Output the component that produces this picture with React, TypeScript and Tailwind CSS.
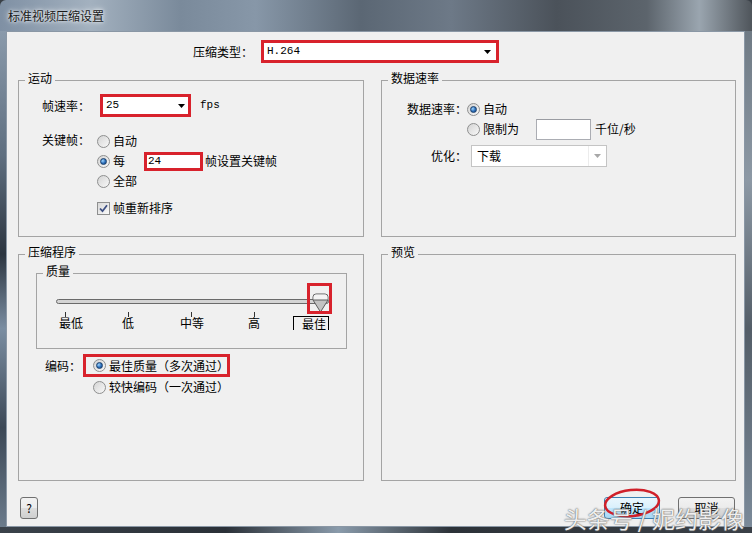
import React from 'react';

const Radio = ({ checked }: { checked?: boolean }) => (
  <span className="flex h-[13px] w-[13px] shrink-0 items-center justify-center rounded-full border border-[#8e8f8f] bg-[linear-gradient(135deg,#d4d4d4,#f8f8f8)]">
    {checked && (
      <span className="h-[7px] w-[7px] rounded-full border border-[#1b3f6b] bg-[radial-gradient(circle_at_35%_35%,#9fd6ff,#2a6cb8_55%,#174d8a)]" />
    )}
  </span>
);

const Check = () => (
  <span className="flex h-[13px] w-[13px] shrink-0 items-center justify-center border border-[#8e8f8f] bg-[linear-gradient(135deg,#d8d8d8,#fafafa)]">
    <svg width="9" height="9" viewBox="0 0 9 9">
      <path d="M1 4.5 L3.5 7.2 L8 1.3" stroke="#3d4f82" strokeWidth="1.8" fill="none" />
    </svg>
  </span>
);

const Arrow = ({ gray }: { gray?: boolean }) => (
  <svg width="7" height="4" viewBox="0 0 7 4">
    <path d="M0 0H7L3.5 4Z" fill={gray ? '#a8a8a8' : '#000'} />
  </svg>
);

const Group = ({ title, className, children }: { title: string; className: string; children?: React.ReactNode }) => (
  <div className={`relative border border-[#a4a4a4] ${className}`}>
    <span className="absolute left-[6px] top-[-11px] bg-[#f0f0f0] px-[3px] leading-[16px]">{title}</span>
    {children}
  </div>
);

const Button = ({ label, primary }: { label: string; primary?: boolean }) => (
  <div
    className={`flex h-[22px] items-center justify-center rounded-[3px] border ${
      primary
        ? 'w-[56px] border-[#3c7fb1] bg-[linear-gradient(180deg,#eaf6fd_0%,#d9f0fc_50%,#bee6fd_51%,#a7d9f5_100%)]'
        : 'w-[57px] border-[#707070] bg-[linear-gradient(180deg,#f2f2f2_0%,#ebebeb_50%,#dddddd_51%,#cfcfcf_100%)]'
    }`}
  >
    {label}
  </div>
);

export default function App() {
  return (
    <div className="relative h-[533px] w-[752px] overflow-hidden bg-[#3a4047] text-[12px] text-black [font-family:'Noto_Sans_CJK_SC',sans-serif]">
      {/* title bar */}
      <div className="flex h-[31px] items-center rounded-t-[6px] bg-[linear-gradient(90deg,#7f90a4_0%,#a3b1bf_12%,#7a8a9b_24%,#8797a8_34%,#5b6774_48%,#6d7987_60%,#4b525a_74%,#5c646c_86%,#9aa5af_93%,#4f555b_100%)] pl-[8px] text-[#1a1a1a] [text-shadow:0_0_6px_#ffffff,0_0_3px_#e9eef3]">
        标准视频压缩设置
      </div>

      <div className="flex h-[496px]">
        <div className="w-[6px] bg-[linear-gradient(180deg,#8a9aab_0%,#5f6f80_25%,#2c3540_45%,#7b8ea2_60%,#3c4856_80%,#6b7b8b_100%)]" />

        {/* client area */}
        <div className="flex w-[739px] flex-col bg-[#f0f0f0] shadow-[inset_0_0_0_1px_#8a97a5]">
          <div className="ml-[187px] mt-[9px] flex h-[23px] items-center">
            <span className="w-[68px]">压缩类型：</span>
            <div className="flex h-[23px] w-[238px] items-center justify-between border-[3px] border-[#d8222c] bg-white pl-[3px] pr-[5px] text-[11px] [font-family:'Liberation_Mono',monospace]">
              <span>H.264</span>
              <Arrow />
            </div>
          </div>

          <div className="ml-[12px] mt-[17px] flex gap-[17px]">
            <Group title="运动" className="h-[157px] w-[346px]">
              <div className="flex flex-col pl-[23px] pt-[13px]">
                <div className="flex h-[23px] items-center">
                  <span className="w-[58px]">帧速率：</span>
                  <div className="flex h-[23px] w-[91px] items-center justify-between border-[3px] border-[#d8222c] bg-white pl-[3px] pr-[3px] text-[11px] [font-family:'Liberation_Mono',monospace]">
                    <span>25</span>
                    <Arrow />
                  </div>
                  <span className="ml-[9px] text-[11px] [font-family:'Liberation_Mono',monospace]">fps</span>
                </div>
                <div className="mt-[14px] flex">
                  <span className="h-[20px] w-[55px] leading-[17px]">关键帧：</span>
                  <div className="flex flex-col">
                    <div className="flex h-[20px] items-center gap-[3px]">
                      <Radio />
                      <span>自动</span>
                    </div>
                    <div className="flex h-[20px] items-center">
                      <Radio checked />
                      <span className="ml-[3px]">每</span>
                      <div className="ml-[19px] flex h-[19px] w-[59px] items-center border-[3px] border-[#d8222c] bg-white pl-[1px] text-[11px] [font-family:'Liberation_Mono',monospace]">
                        24
                      </div>
                      <span className="ml-[2px]">帧设置关键帧</span>
                    </div>
                    <div className="flex h-[20px] items-center gap-[3px]">
                      <Radio />
                      <span>全部</span>
                    </div>
                    <div className="mt-[7px] flex h-[20px] items-center gap-[3px]">
                      <Check />
                      <span>帧重新排序</span>
                    </div>
                  </div>
                </div>
              </div>
            </Group>

            <Group title="数据速率" className="h-[157px] w-[355px]">
              <div className="flex flex-col pt-[18px]">
                <div className="flex h-[20px] items-center">
                  <span className="w-[85px] text-right">数据速率：</span>
                  <Radio checked />
                  <span className="ml-[3px]">自动</span>
                </div>
                <div className="flex h-[20px] items-center">
                  <span className="w-[85px]" />
                  <Radio />
                  <span className="ml-[3px]">限制为</span>
                  <div className="ml-[17px] h-[21px] w-[55px] border border-[#abadb3] border-t-[#9a9ca2] bg-white" />
                  <span className="ml-[4px]">千位/秒</span>
                </div>
                <div className="mt-[6px] flex h-[22px] items-center">
                  <span className="w-[85px] text-right">优化：</span>
                  <div className="ml-[4px] flex h-[22px] w-[136px] items-center border border-[#c4c4c4] bg-white pl-[5px]">
                    <span className="flex-1">下载</span>
                    <div className="flex h-full w-[18px] items-center justify-center border-l border-[#ececec]">
                      <Arrow gray />
                    </div>
                  </div>
                </div>
              </div>
            </Group>
          </div>

          <div className="ml-[12px] mt-[17px] flex gap-[17px]">
            <Group title="压缩程序" className="h-[227px] w-[346px]">
              <div className="flex flex-col">
                <Group title="质量" className="ml-[17px] mt-[18px] h-[76px] w-[311px]">
                  <div className="flex flex-col">
                    <div className="relative ml-[19px] mt-[25px] h-[5px] w-[273px] rounded-full border border-[#6a6a6a] bg-[#d4d4d4]">
                      <svg className="absolute left-[255px] top-[-7px]" width="17" height="20" viewBox="0 0 17 20">
                        <path d="M1 7 L1 4 Q1 1 4 1 H13 Q16 1 16 4 L16 7 L8.5 19 Z" fill="#c2c2c2" stroke="#5c5c5c" />
                        <path d="M1.5 7 L1.5 4 Q1.5 1.5 4 1.5 H13 Q15.5 1.5 15.5 4 L15.5 7 Z" fill="#f4f4f4" />
                        <path d="M1 7 H16" stroke="#5c5c5c" />
                      </svg>
                      <div className="absolute left-[250px] top-[-17px] h-[31px] w-[25px] border-[3px] border-[#d8222c]" />
                    </div>
                    <div className="mt-[8px] flex h-[5px]">
                      <span className="ml-[28px] w-px bg-[#333]" />
                      <span className="ml-[62px] w-px bg-[#333]" />
                      <span className="ml-[62px] w-px bg-[#333]" />
                      <span className="ml-[62px] w-px bg-[#333]" />
                    </div>
                    <div className="mt-[-1px] flex h-[14px] items-start leading-[14px]">
                      <span className="ml-[22px]">最低</span>
                      <span className="ml-[39px]">低</span>
                      <span className="ml-[46px]">中等</span>
                      <span className="ml-[44px]">高</span>
                      <span className="ml-[33px] h-[14px] border-x border-t border-black pl-[8px] pr-[2px] leading-[14px]">最佳</span>
                    </div>
                  </div>
                </Group>
                <div className="mt-[5px] flex items-center pl-[26px]">
                  <span className="w-[38px]">编码：</span>
                  <div className="flex h-[23px] w-[147px] items-center border-[3px] border-[#d8222c] pl-[7px]">
                    <Radio checked />
                    <span className="ml-[3px]">最佳质量（多次通过）</span>
                  </div>
                </div>
                <div className="flex h-[20px] items-center pl-[74px]">
                  <Radio />
                  <span className="ml-[3px]">较快编码（一次通过）</span>
                </div>
              </div>
            </Group>

            <Group title="预览" className="h-[227px] w-[355px]" />
          </div>

          <div className="mt-[16px] flex h-[22px] items-center pl-[14px] pr-[10px]">
            <div className="flex h-[22px] w-[18px] items-center justify-center rounded-[3px] border border-[#707070] bg-[linear-gradient(180deg,#f2f2f2_0%,#ebebeb_50%,#dddddd_51%,#cfcfcf_100%)]">
              ?
            </div>
            <div className="ml-auto">
              <Button label="确定" primary />
            </div>
            <div className="ml-[18px]">
              <Button label="取消" />
            </div>
          </div>
        </div>

        <div className="w-[7px] bg-[linear-gradient(180deg,#6f7a84_0%,#8d99a5_30%,#545e68_60%,#7b8a99_100%)]" />
      </div>

      <div className="h-[6px] bg-[linear-gradient(90deg,#3a424a_0%,#2a3037_30%,#8a9bab_45%,#2c3238_60%,#3a4047_100%)]" />

      {/* annotation ellipse */}
      <svg className="absolute left-[599px] top-[485px]" width="66" height="38" viewBox="0 0 66 38">
        <ellipse cx="33" cy="18" rx="27" ry="13" transform="rotate(-6 33 18)" fill="none" stroke="#d0202a" strokeWidth="2.5" />
      </svg>

      {/* watermark */}
      <div className="absolute bottom-[1px] right-[8px] text-[23px] leading-[28px] text-white/90 [text-shadow:0_0_1px_#555,0_0_2px_#777]">
        头条号 / 妮约影像
      </div>
    </div>
  );
}
